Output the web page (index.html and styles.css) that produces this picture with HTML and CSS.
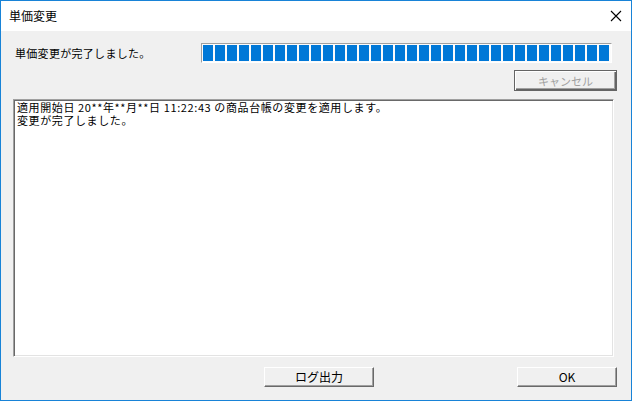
FILE: index.html
```html
<!DOCTYPE html>
<html lang="ja">
<head>
<meta charset="utf-8">
<title>単価変更</title>
<link rel="stylesheet" href="styles.css">
</head>
<body>
<div class="window">
  <div class="titlebar">
    <span class="title">単価変更</span>
    <svg class="close" width="12" height="12" viewBox="0 0 12 12"><path d="M1 1 L11 11 M11 1 L1 11" stroke="#000" stroke-width="1.1" fill="none"/></svg>
  </div>
  <div class="content">
    <div class="row-status">
      <span class="status">単価変更が完了しました。</span>
      <div class="progress">
        <span></span><span></span><span></span><span></span><span></span><span></span><span></span><span></span><span></span><span></span>
        <span></span><span></span><span></span><span></span><span></span><span></span><span></span><span></span><span></span><span></span>
        <span></span><span></span><span></span><span></span><span></span><span></span><span></span><span></span><span></span><span></span>
        <span></span><span></span><span></span><span></span>
      </div>
    </div>
    <div class="row-cancel">
      <button class="btn btn-cancel" disabled>キャンセル</button>
    </div>
    <div class="log">
      <div class="log-line">適用開始日 20**年**月**日 11:22:43 の商品台帳の変更を適用します。</div>
      <div class="log-line">変更が完了しました。</div>
    </div>
    <div class="row-buttons">
      <button class="btn btn-log">ログ出力</button>
      <button class="btn btn-ok">OK</button>
    </div>
  </div>
</div>
</body>
</html>
```

FILE: styles.css
```css
html, body {
  margin: 0;
  padding: 0;
  background: #f0f0f0;
}
body {
  font-family: "Noto Sans CJK JP", "Noto Sans", sans-serif;
  color: #000;
}
.window {
  width: 632px;
  height: 401px;
  box-sizing: border-box;
  border: 1px solid #1883d7;
  display: flex;
  flex-direction: column;
  background: #f0f0f0;
}
.titlebar {
  height: 30px;
  background: #fff;
  display: flex;
  align-items: center;
  justify-content: space-between;
  padding: 0 9px 0 8px;
  flex: none;
}
.title {
  font-size: 12px;
  line-height: 14px;
}
.close {
  display: block;
}
.content {
  flex: 1;
  display: flex;
  flex-direction: column;
  padding: 12px 14px 0 12px;
}
.row-status {
  display: flex;
  align-items: center;
  justify-content: space-between;
  height: 20px;
  padding-right: 5px;
}
.status {
  font-size: 11px;
  line-height: 14px;
  letter-spacing: 0.3px;
  padding-left: 2px;
}
.progress {
  width: 411px;
  height: 20px;
  box-sizing: border-box;
  border-top: 1px solid #a0a0a0;
  border-left: 1px solid #a0a0a0;
  border-right: 1px solid #fff;
  border-bottom: 1px solid #fff;
  background: #fbfbfb;
  padding: 1px;
  display: flex;
  gap: 2px;
}
.progress span {
  width: 10px;
  height: 16px;
  background: #0078d7;
  flex: none;
}
.row-cancel {
  display: flex;
  justify-content: flex-end;
  margin-top: 7px;
}
.btn {
  font-family: "Noto Sans CJK JP", "Noto Sans", sans-serif;
  font-size: 11px;
  line-height: 14px;
  color: #000;
  background: #f0f0f0;
  box-sizing: border-box;
  border-top: 1px solid #fff;
  border-left: 1px solid #fff;
  border-right: 1px solid #696969;
  border-bottom: 1px solid #696969;
  box-shadow: inset -1px -1px 0 #a0a0a0;
  padding: 0;
  margin: 0;
}
.btn-cancel {
  width: 103px;
  height: 21px;
  color: #a0a0a0;
  border: 1px solid #646464;
  box-shadow: inset 1px 1px 0 #fff, inset -1px -1px 0 #646464, inset -2px -2px 0 #a0a0a0;
}
.log {
  margin-top: 8px;
  margin-right: 3px;
  height: 258px;
  box-sizing: border-box;
  background: #fff;
  border-top: 1px solid #a0a0a0;
  border-left: 1px solid #a0a0a0;
  border-right: 1px solid #fff;
  border-bottom: 1px solid #fff;
  box-shadow: inset 1px 1px 0 #696969, inset -1px -1px 0 #e3e3e3;
  padding: 1px 3px;
  font-size: 11px;
  letter-spacing: 0.6px;
}
.log-line {
  height: 13px;
  line-height: 13px;
}
.row-buttons {
  display: flex;
  justify-content: flex-end;
  gap: 143px;
  margin-top: 10px;
}
.btn-log {
  width: 110px;
  height: 20px;
  font-size: 12px;
}
.btn-ok {
  width: 100px;
  height: 20px;
  font-size: 12px;
}
```
